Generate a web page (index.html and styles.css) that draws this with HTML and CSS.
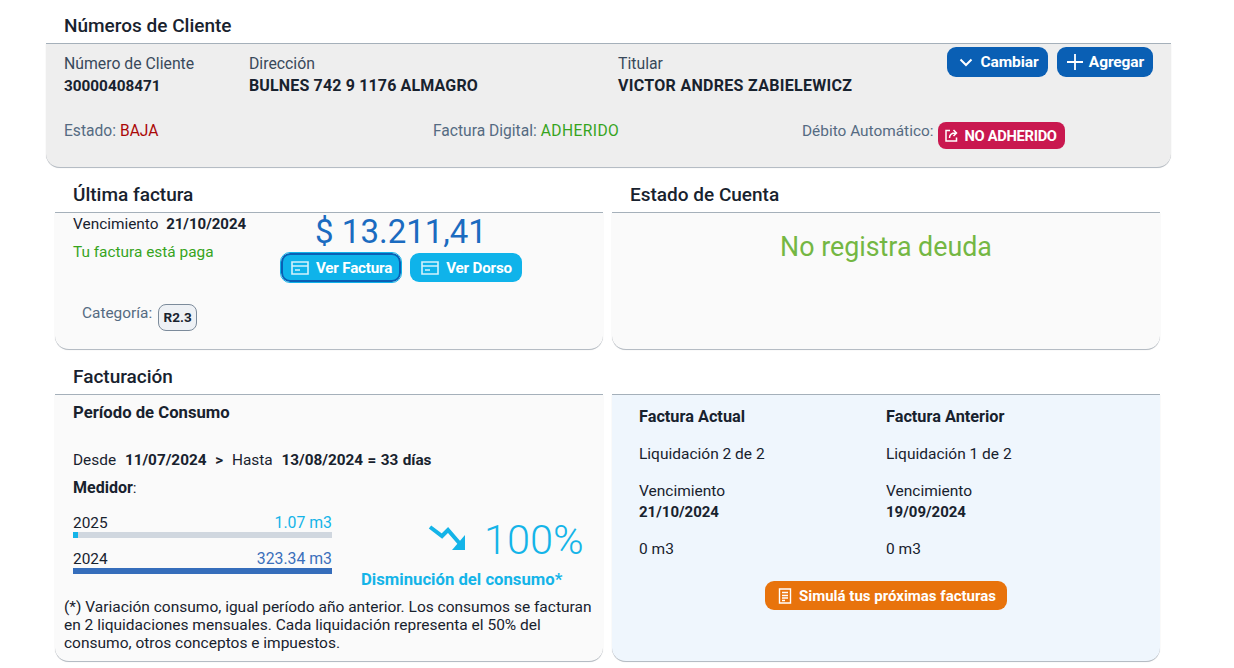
FILE: index.html
```html
<!DOCTYPE html>
<html lang="es">
<head>
<meta charset="utf-8">
<title>Números de Cliente</title>
<link rel="stylesheet" href="styles.css">
</head>
<body>
<main class="page">
  <section class="clients">
    <h2 class="title title-main">Números de Cliente</h2>
    <div class="client-panel">
      <div class="client-top">
        <div class="field f-num"><span class="label">Número de Cliente</span><strong class="num">30000408471</strong></div>
        <div class="field f-dir"><span class="label">Dirección</span><strong class="caps">BULNES 742 9 1176 ALMAGRO</strong></div>
        <div class="field f-tit"><span class="label">Titular</span><strong class="caps caps-wide">VICTOR ANDRES ZABIELEWICZ</strong></div>
        <div class="actions">
          <button class="btn btn-blue"><svg width="18" height="18" viewBox="0 0 18 18"><path d="M3.500 6.500 9 12l5.500-5.500" fill="none" stroke="#fff" stroke-width="2"/></svg>Cambiar</button>
          <button class="btn btn-blue btn-add"><svg width="18" height="18" viewBox="0 0 18 18"><path d="M9 1v16M1 9h16" fill="none" stroke="#fff" stroke-width="1.800"/></svg>Agregar</button>
        </div>
      </div>
      <div class="client-status">
        <div class="status"><span class="muted">Estado:</span> <span class="red">BAJA</span></div>
        <div class="status"><span class="muted">Factura Digital:</span> <span class="green">ADHERIDO</span></div>
        <div class="status status-debit"><span class="muted">Débito Automático:</span>
          <a class="pill-red"><svg width="15" height="15" viewBox="0 0 15 15"><path d="M6 2.500H2v10.500h10.500V9.500" fill="none" stroke="#fff" stroke-width="1.500"/><path d="M5.500 10c0-3.500 2-5 6-5M9.500 2l3 3-3 3" fill="none" stroke="#fff" stroke-width="1.500"/></svg>NO ADHERIDO</a>
        </div>
      </div>
    </div>
  </section>

  <div class="row row-1">
    <section class="col">
      <h2 class="title">Última factura</h2>
      <div class="card card-bill">
        <div class="bill-top">
          <div class="bill-left">
            <p class="due">Vencimiento&nbsp; <strong>21/10/2024</strong></p>
            <p class="paid">Tu factura está paga</p>
          </div>
          <div class="bill-right">
            <div class="amount">$ 13.211,41</div>
            <div class="bill-btns">
              <button class="btn btn-cyan btn-focus"><svg width="20" height="16" viewBox="0 0 20 16"><path d="M2 2h16v12H2zM2 6h16M5 10h5" fill="none" stroke="#d5f2fc" stroke-width="1.600"/></svg>Ver Factura</button>
              <button class="btn btn-cyan"><svg width="20" height="16" viewBox="0 0 20 16"><path d="M2 2h16v12H2zM2 6h16M5 10h5" fill="none" stroke="#d5f2fc" stroke-width="1.600"/></svg>Ver Dorso</button>
            </div>
          </div>
        </div>
        <div class="category"><span class="muted">Categoría:</span><span class="tag">R2.3</span></div>
      </div>
    </section>
    <section class="col">
      <h2 class="title">Estado de Cuenta</h2>
      <div class="card card-debt"><p class="no-debt">No registra deuda</p></div>
    </section>
  </div>

  <div class="row row-2">
    <section class="col">
      <h2 class="title">Facturación</h2>
      <div class="card card-usage">
        <h3 class="sub">Período de Consumo</h3>
        <p class="period">Desde&nbsp; <strong>11/07/2024&nbsp; &gt;</strong>&nbsp; Hasta&nbsp; <strong>13/08/2024 = 33 días</strong></p>
        <p class="meter"><strong>Medidor</strong>:</p>
        <div class="usage-mid">
          <div class="bars">
            <div class="bar-block">
              <div class="bar-labels"><span>2025</span><span class="v-cyan">1.07 m3</span></div>
              <div class="bar-track"><div class="bar-fill fill-cyan" style="width:2%"></div></div>
            </div>
            <div class="bar-block">
              <div class="bar-labels"><span>2024</span><span class="v-blue">323.34 m3</span></div>
              <div class="bar-track"><div class="bar-fill fill-blue" style="width:100%"></div></div>
            </div>
          </div>
          <div class="change">
            <div class="change-top">
              <svg width="40" height="30" viewBox="0 0 40 30"><path d="M2 4l12 9 6-6 13 15" fill="none" stroke="#14b4e8" stroke-width="4"/><path d="M37 12v15H24z" fill="#14b4e8"/></svg>
              <span class="pct">100%</span>
            </div>
            <div class="change-label">Disminución del consumo*</div>
          </div>
        </div>
        <p class="note">(*) Variación consumo, igual período año anterior. Los consumos se facturan en 2 liquidaciones mensuales. Cada liquidación representa el 50% del consumo, otros conceptos e impuestos.</p>
      </div>
    </section>
    <section class="col">
      <div class="title title-blank"></div>
      <div class="card card-compare">
        <div class="compare-grid">
          <div class="compare-col">
            <h3 class="cmp-head">Factura Actual</h3>
            <p class="cmp-item">Liquidación 2 de 2</p>
            <p class="cmp-item">Vencimiento<br><strong>21/10/2024</strong></p>
            <p class="cmp-item">0 m3</p>
          </div>
          <div class="compare-col">
            <h3 class="cmp-head">Factura Anterior</h3>
            <p class="cmp-item">Liquidación 1 de 2</p>
            <p class="cmp-item">Vencimiento<br><strong>19/09/2024</strong></p>
            <p class="cmp-item">0 m3</p>
          </div>
        </div>
        <div class="sim-wrap">
          <button class="btn btn-orange"><svg width="18" height="18" viewBox="0 0 18 18"><path d="M3.500 2h11v14h-11zM6 5.500h6M6 8.500h6M6 11h6M6 13.500h3" fill="none" stroke="#fff" stroke-width="1.400"/></svg>Simulá tus próximas facturas</button>
        </div>
      </div>
    </section>
  </div>
</main>
</body>
</html>
```
FILE: styles.css
```css
* { box-sizing: border-box; }
html, body { margin: 0; padding: 0; background: #fff; }
body { font-family: Roboto, "Noto Sans", sans-serif; font-size: 15.4px; color: #18222e; height: 668px; overflow: hidden; }
p, h2, h3 { margin: 0; }
strong { font-weight: 700; font-size: 15px; }
.page { width: 1125px; margin-left: 46px; }
.title { font-size: 19px; font-weight: 500; line-height: 20px; height: 44px; padding: 16px 0 0 18px; border-bottom: 1px solid #a9b4be; color: #18222e; }
.client-panel { height: 124px; background: #eeeeee; border-bottom: 1px solid #b5bcc4; border-radius: 0 0 14px 14px; padding: 9px 18px 0; box-shadow: 0 0 1px rgba(0,0,0,.2); }
.client-top { display: flex; height: 68px; }
.field { display: flex; flex-direction: column; line-height: 22px; }
.label { color: #39495b; font-size: 15.8px; }
.num { font-size: 15.300px; }
.caps { font-size: 16px; letter-spacing: .15px; }
.caps-wide { letter-spacing: .3px; }
.f-num { width: 185px; }
.f-dir { width: 369px; }
.f-tit { width: 329px; }
.actions { display: flex; gap: 9px; align-items: flex-start; margin-top: -6px; }
.btn { display: inline-flex; align-items: center; justify-content: center; gap: 6px; border: 0; font-family: inherit; font-weight: 700; color: #fff; font-size: 15px; border-radius: 9px; padding: 0; white-space: nowrap; }
.btn-blue { background: #0a5fb4; height: 30px; width: 101px; font-size: 15.500px; letter-spacing: -.1px; }
.btn-add { width: 96px; gap: 5px; }
.client-status { display: grid; grid-template-columns: repeat(3, 369px); }
.status { display: flex; gap: 4px; align-items: flex-start; line-height: 20px; font-size: 15.600px; }
.status-debit { font-size: 15.400px; }
.muted { color: #556b82; }
.red { color: #aa0808; }
.green { color: #36a41d; letter-spacing: .4px; }
.pill-red { display: inline-flex; align-items: center; gap: 5px; background: #c9184f; color: #fff; font-weight: 700; font-size: 14.700px; letter-spacing: -.3px; height: 27px; width: 127px; border-radius: 8px; padding-left: 6px; margin: 1px 0 0 1px; }
.row { display: grid; grid-template-columns: 548px 548px; gap: 9px; padding-left: 9px; }
.row-1 { height: 182px; }
.row-2 { height: 312px; }
.col { display: flex; flex-direction: column; }
.col .title { height: 45px; padding: 17px 0 0 18px; }
.title-blank { padding: 0; }
.card { border-bottom: 1px solid #b5bcc4; border-radius: 0 0 14px 14px; background: #fafafa; box-shadow: 0 0 1px rgba(0,0,0,.2); }
.row-1 .card { height: 137px; }
.row-2 .card { height: 267px; }
.card-bill { padding: 1px 0 0 18px; }
.bill-top { display: flex; height: 82px; }
.bill-left { width: 193px; line-height: 20px; }
.paid { color: #36a41d; margin-top: 8px; }
.bill-right { width: 260px; display: flex; flex-direction: column; align-items: center; margin-left: 5px; }
.amount { color: #1b6bc0; font-size: 33px; line-height: 36px; }
.bill-btns { display: flex; gap: 9px; margin-top: 3px; padding-left: 1px; }
.btn-cyan { background: #0fb3ea; height: 29px; font-size: 15.200px; letter-spacing: -.2px; width: 112px; }
.btn-focus { width: 120px; border: 2px solid #0a5fb4; outline: 1px solid #0fb3ea; }
.category { display: flex; gap: 6px; padding-left: 9px; margin-top: 8px; align-items: flex-start; }
.tag { background: #eef1f5; border: 1px solid #7c8b9b; border-radius: 8px; height: 27px; width: 39px; font-size: 13.500px; font-weight: 700; display: flex; align-items: center; justify-content: center; padding-bottom: 2px; }
.no-debt { color: #74b743; font-size: 26.800px; text-align: center; line-height: 34px; padding-top: 17px; }
.card-usage { padding: 8px 8px 0 18px; }
.sub { font-size: 16.700px; font-weight: 700; line-height: 20px; }
.period { margin-top: 27px; line-height: 20px; word-spacing: .6px; }
.period strong { font-size: 15.300px; }
.meter { margin-top: 8px; line-height: 20px; }
.meter strong { font-size: 16px; }
.usage-mid { display: flex; margin-top: 16px; height: 85px; }
.bars { width: 259px; }
.bar-block { margin-bottom: 12px; }
.bar-labels { display: flex; justify-content: space-between; line-height: 18px; height: 18px; }
.v-cyan { color: #14b4e8; font-size: 15.800px; }
.v-blue { color: #3a6fbb; font-size: 15.800px; }
.bar-track { height: 6px; background: #d0d7df; }
.bar-fill { height: 100%; }
.fill-cyan { background: #14b4e8; }
.fill-blue { background: #356dbb; }
.change { margin-left: 29px; width: 232px; color: #14b4e8; }
.change-top { display: flex; align-items: center; gap: 16px; padding-left: 67px; height: 48px; white-space: nowrap; }
.pct { font-size: 41.500px; font-weight: 300; padding-top: 3px; }
.change-label { font-weight: 700; font-size: 16.700px; text-align: left; margin-top: 8px; line-height: 20px; white-space: nowrap; }
.note { margin-left: -9px; line-height: 18px; margin-top: -1px; font-size: 15.500px; color: #18222e; }
.card-compare { background: #eff6fd; padding: 12px 0 0 27px; }
.compare-grid { display: grid; grid-template-columns: 247px 247px; }
.cmp-head { font-size: 16.300px; font-weight: 700; line-height: 20px; }
.cmp-item { line-height: 21px; margin-top: 17px; font-size: 15.500px; }
.cmp-item + .cmp-item { margin-top: 16px; }
.sim-wrap { display: flex; justify-content: center; margin-top: 21px; padding-right: 27px; }
.btn-orange { background: #e8730c; height: 29px; width: 242px; gap: 5px; }
```
